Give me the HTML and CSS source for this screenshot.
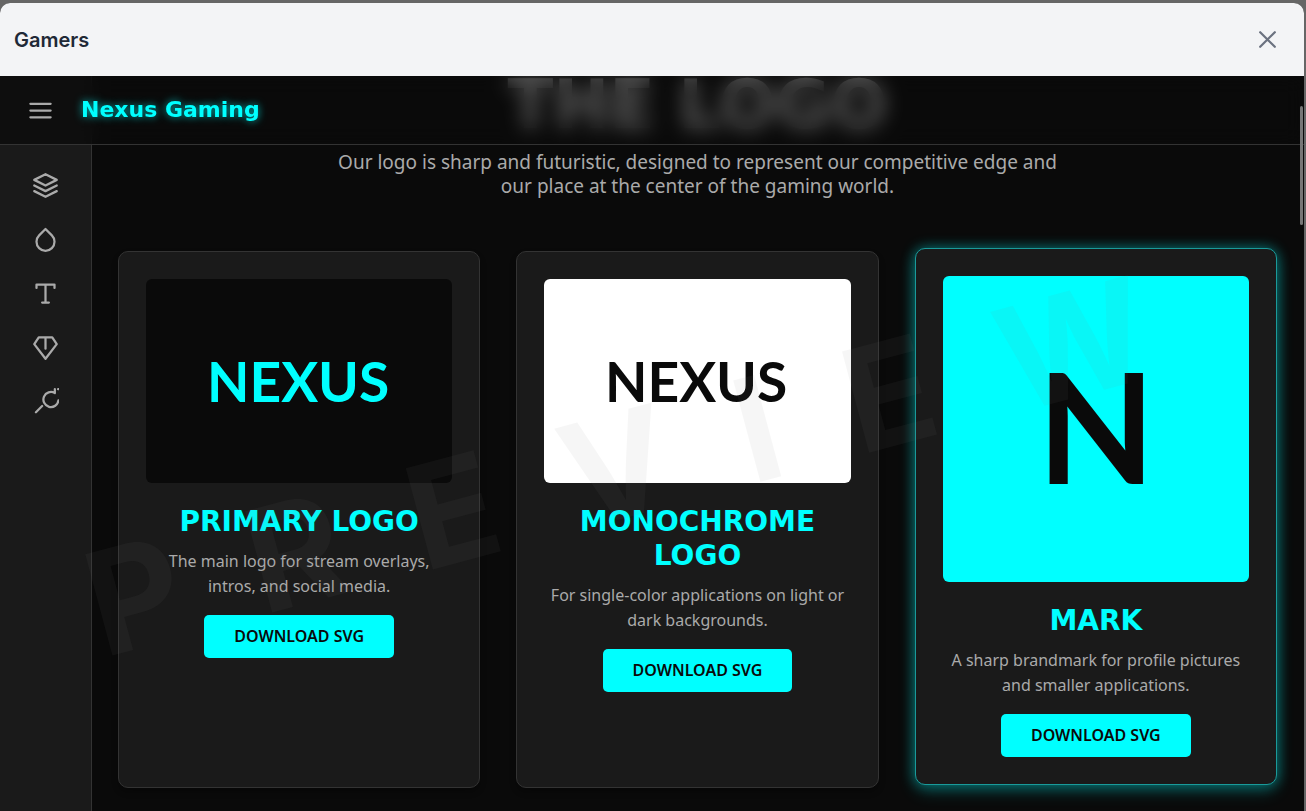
FILE: index.html
```html
<!DOCTYPE html>
<html lang="en">
<head>
<meta charset="utf-8">
<meta name="viewport" content="width=device-width, initial-scale=1">
<title>Gamers</title>
<link rel="stylesheet" href="styles.css">
</head>
<body>
<div class="modal">
  <header class="modal-header">
    <h1 class="modal-title">Gamers</h1>
    <button class="modal-close" type="button" aria-label="Close">
      <svg class="close-icon" viewBox="0 0 24 24"><path d="M5.500 5.500l13 13M18.500 5.500l-13 13"/></svg>
    </button>
  </header>
  <div class="app">
    <nav class="sidebar" aria-label="Sections">
      <a class="nav-link" href="#logo" aria-label="Logo"><svg class="icon" viewBox="0 0 24 24"><path d="M12 2L2 7l10 5 10-5-10-5zM2 17l10 5 10-5M2 12l10 5 10-5"/></svg></a>
      <a class="nav-link" href="#colors" aria-label="Colors"><svg class="icon" viewBox="0 0 24 24"><path d="M12 2.69l5.66 5.66a8 8 0 1 1-11.31 0z"/></svg></a>
      <a class="nav-link" href="#type" aria-label="Typography"><svg class="icon" viewBox="0 0 24 24"><path d="M4 7V4h16v3M9 20h6M12 4v16"/></svg></a>
      <a class="nav-link" href="#assets" aria-label="Assets"><svg class="icon" viewBox="0 0 24 24"><path d="M6 3h12l4 6-10 13L2 9zM12 3v10"/></svg></a>
      <a class="nav-link" href="#tools" aria-label="Tools"><svg class="icon" viewBox="0 0 24 24"><path d="M23.500 11A6.700 6.700 0 1 1 20.300 4.500V1M23.200 1h2M3.500 21.500l5.500-5.500"/></svg></a>
    </nav>
    <main class="content">
      <section class="intro" id="logo">
        <h2 class="intro-title">THE LOGO</h2>
        <p class="intro-text">Our logo is sharp and futuristic, designed to represent our competitive edge and our place at the center of the gaming world.</p>
      </section>
      <section class="cards">
        <article class="card">
          <svg class="art art-dark" viewBox="0 0 300 200"><text class="wordmark" x="149" y="120">NEXUS</text></svg>
          <h3 class="card-title">PRIMARY LOGO</h3>
          <p class="card-text">The main logo for stream overlays, intros, and social media.</p>
          <a class="download" href="#primary">DOWNLOAD SVG</a>
        </article>
        <article class="card">
          <svg class="art art-light" viewBox="0 0 300 200"><text class="wordmark" x="149" y="120">NEXUS</text></svg>
          <h3 class="card-title">MONOCHROME LOGO</h3>
          <p class="card-text">For single-color applications on light or dark backgrounds.</p>
          <a class="download" href="#mono">DOWNLOAD SVG</a>
        </article>
        <article class="card card-active">
          <svg class="art art-cyan" viewBox="0 0 300 300"><text class="lettermark" x="150" y="204">N</text></svg>
          <h3 class="card-title">MARK</h3>
          <p class="card-text">A sharp brandmark for profile pictures and smaller applications.</p>
          <a class="download" href="#mark">DOWNLOAD SVG</a>
        </article>
      </section>
    </main>
    <header class="topbar">
      <button class="menu" type="button" aria-label="Menu"><svg class="icon" viewBox="0 0 24 24"><path d="M3 6h18M3 12h18M3 18h18"/></svg></button>
      <span class="brand">Nexus Gaming</span>
    </header>
    <div class="watermark" aria-hidden="true"><span class="watermark-text">PREVIEW</span></div>
    <div class="scroll-thumb"></div>
  </div>
</div>
</body>
</html>
```

FILE: styles.css
```css
* { box-sizing: border-box; }

body {
  margin: 0;
  height: 100vh;
  padding: 3px 2px 0 0;
  background: #666;
  overflow: hidden;
  font-family: "Noto Sans", sans-serif;
}

h1, h2, h3, p { margin: 0; }

.modal {
  display: flex;
  flex-direction: column;
  height: 100%;
  border-radius: 10px 10px 0 0;
  overflow: hidden;
  background: #0a0a0a;
}

.modal-header {
  display: flex;
  align-items: center;
  justify-content: space-between;
  flex: none;
  height: 73px;
  padding: 0 23px 0 14px;
  background: #f3f4f6;
}

.modal-title {
  font: 600 20px/28px Inter, sans-serif;
  color: #1f2937;
}

.modal-close, .menu {
  display: flex;
  padding: 0;
  border: 0;
  background: none;
  cursor: pointer;
}

.close-icon {
  width: 27px;
  height: 27px;
  overflow: visible;
}

.close-icon path, .icon path {
  fill: none;
  stroke: #6b7280;
  stroke-width: 2;
  stroke-linecap: round;
  stroke-linejoin: round;
}

.icon { width: 27px; height: 27px; display: block; }
.icon path { stroke: #aaa; }

.app {
  position: relative;
  display: flex;
  flex: 1;
  min-height: 0;
  overflow: hidden;
}

.sidebar {
  display: flex;
  flex-direction: column;
  align-items: center;
  gap: 27px;
  flex: none;
  width: 92px;
  padding-top: 96px;
  background: #1a1a1a;
  border-right: 1px solid #333;
}

.nav-link { display: block; }

.content {
  flex: 1;
  min-width: 0;
  padding: 0 27px 0 26px;
}

.intro {
  max-width: 740px;
  margin: 0 auto;
  text-align: center;
}

.intro-title {
  padding-bottom: 16px;
  font: 700 67px/58px "DejaVu Sans", sans-serif;
  color: #fff;
}

.intro-text {
  font-size: 19px;
  line-height: 24px;
  color: #aaa;
}

.cards {
  display: grid;
  grid-template-columns: repeat(3, minmax(0, 1fr));
  gap: 36px;
  margin-top: 53px;
}

.card {
  display: flex;
  flex-direction: column;
  align-items: center;
  padding: 27px;
  border: 1px solid #333;
  border-radius: 10px;
  background: #1a1a1a;
  box-shadow: 0 4px 6px rgba(0, 0, 0, .3);
  text-align: center;
}

.card-active {
  border-color: #1a9a9a;
  box-shadow: 0 0 14px rgba(0, 255, 255, .4), 0 6px 18px rgba(0, 255, 255, .2);
  transform: translateY(-3px);
}

.art {
  display: block;
  width: 100%;
  margin-bottom: 22px;
  border-radius: 6px;
}

.art-dark { background: #0a0a0a; fill: #0ff; }
.art-light { background: #fff; fill: #0a0a0a; }
.art-cyan { background: #0ff; fill: #0a0a0a; }

.wordmark, .lettermark {
  font-family: Lato, sans-serif;
  font-weight: 700;
  text-anchor: middle;
}

.wordmark { font-size: 54px; }
.lettermark { font-size: 150px; }

.card-title {
  margin-bottom: 10px;
  font: 700 28px/34px "DejaVu Sans", sans-serif;
  color: #0ff;
}

.card-text {
  margin-bottom: 16px;
  font-size: 16px;
  line-height: 25px;
  color: #aaa;
}

.download {
  padding: 0 30px;
  border-radius: 5px;
  background: #0ff;
  color: #0a0a0a;
  font-size: 16px;
  font-weight: 600;
  line-height: 43px;
  text-decoration: none;
}

.topbar {
  position: absolute;
  inset: 0 0 auto;
  display: flex;
  align-items: center;
  gap: 27px;
  height: 69px;
  padding-left: 27px;
  background: rgba(10, 10, 10, .7);
  border-bottom: 1px solid #333;
  backdrop-filter: blur(10px);
}

.brand {
  font: 700 22px/28px "DejaVu Sans", sans-serif;
  color: #0ff;
  text-shadow: 0 0 8px rgba(0, 255, 255, .7);
}

.watermark {
  position: absolute;
  inset: 0;
  display: grid;
  place-items: center;
  padding-top: 26px;
  pointer-events: none;
}

.watermark-text {
  font: 700 144px/1 Inter, sans-serif;
  letter-spacing: .5em;
  color: rgba(128, 128, 128, .07);
  transform: rotate(-15deg);
}

.scroll-thumb {
  position: absolute;
  top: 30px;
  right: 1px;
  width: 3px;
  height: 119px;
  border-radius: 2px;
  background: #777;
}
```
